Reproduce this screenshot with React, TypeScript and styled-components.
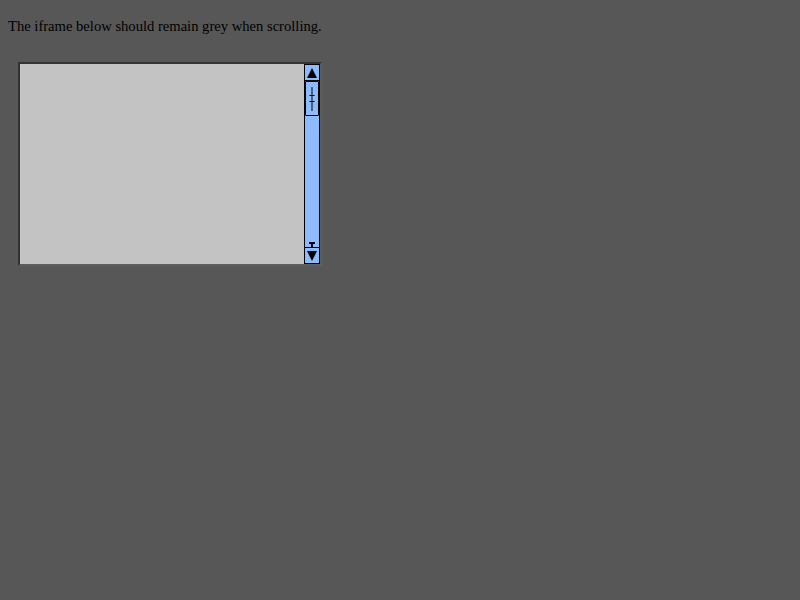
import React from "react";
import styled, { createGlobalStyle } from "styled-components";

const Global = createGlobalStyle`
  html, body { background: #575757; }
  body {
    margin: 8px;
    font-family: "Liberation Serif", "Times New Roman", serif;
    font-size: 14.6px;
    color: #000;
  }
`;

const Note = styled.p`
  margin: 9px 0 0 0;
  line-height: 18px;
`;

const Frame = styled.div`
  margin: 27px 0 0 10px;
  width: 300px;
  height: 200px;
  border-style: solid;
  border-width: 2px;
  border-color: #333333 #5d5d5d #5d5d5d #333333;
  display: flex;
  background: #c3c3c3;
`;

const Content = styled.div`
  flex: 1;
  background: #c3c3c3;
`;

const Track = styled.div`
  width: 14px;
  border: 1px solid #000;
  background: #8cbcff;
  display: flex;
  flex-direction: column;
`;

const ArrowButton = styled.div<{ $top?: boolean }>`
  height: 15px;
  display: flex;
  align-items: center;
  justify-content: center;
  ${(p) => (p.$top ? "border-bottom: 1px solid #000;" : "border-top: 1px solid #000;")}
`;

const Thumb = styled.div`
  height: 33px;
  border: 1px solid #000;
  border-radius: 1px;
  display: flex;
  justify-content: center;
  align-items: center;
`;

const Spacer = styled.div`
  flex: 1;
  display: flex;
  align-items: flex-end;
  justify-content: center;
`;

const Grip = () => (
  <svg width="12" height="26" viewBox="0 0 12 26">
    <line x1="6" y1="1" x2="6" y2="25" stroke="#000" strokeWidth="1" />
    <line x1="3.5" y1="9.5" x2="8.5" y2="9.5" stroke="#000" strokeWidth="1" />
    <line x1="3.5" y1="15.5" x2="8.5" y2="15.5" stroke="#000" strokeWidth="1" />
  </svg>
);

const Stub = () => (
  <svg width="12" height="5" viewBox="0 0 12 5" style={{ display: "block" }}>
    <rect x="3" y="0" width="6" height="2" fill="#000" />
    <rect x="5" y="0" width="2" height="5" fill="#000" />
  </svg>
);

const Tri = ({ up }: { up?: boolean }) => (
  <svg width="10" height="10" viewBox="0 0 10 10">
    {up ? (
      <polygon points="5,0 10,10 0,10" fill="#000" />
    ) : (
      <polygon points="0,0 10,0 5,10" fill="#000" />
    )}
  </svg>
);

export default function App() {
  return (
    <>
      <Global />
      <Note>The iframe below should remain grey when scrolling.</Note>
      <Frame>
        <Content />
        <Track>
          <ArrowButton $top>
            <Tri up />
          </ArrowButton>
          <Thumb>
            <Grip />
          </Thumb>
          <Spacer>
            <Stub />
          </Spacer>
          <ArrowButton>
            <Tri />
          </ArrowButton>
        </Track>
      </Frame>
    </>
  );
}
